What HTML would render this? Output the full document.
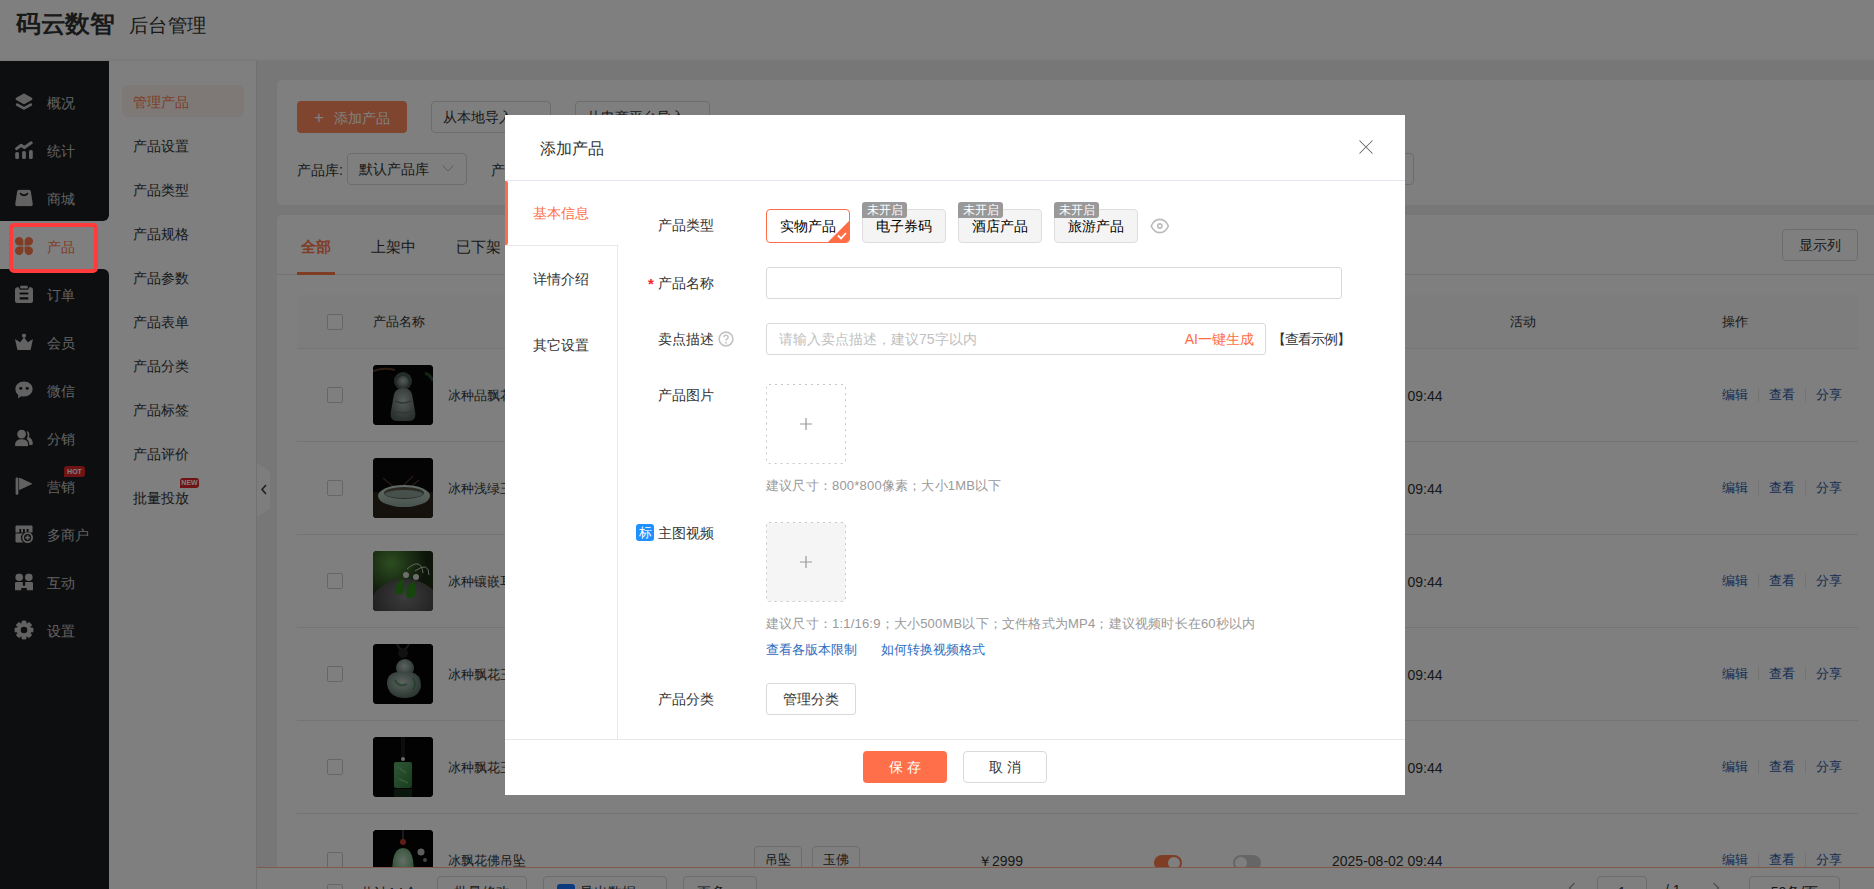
<!DOCTYPE html>
<html><head><meta charset="utf-8">
<style>
*{box-sizing:border-box;margin:0;padding:0}
html,body{width:1874px;height:889px;overflow:hidden;background:#eeeeee;font-family:"Liberation Sans",sans-serif;color:#333;font-size:14px}
.abs{position:absolute}
#header{position:absolute;left:0;top:0;width:1874px;height:61px;background:#fff}
#logo{position:absolute;left:16px;top:9px;font-size:24px;transform:scaleX(1.03);transform-origin:0 0;font-weight:bold;color:#333;line-height:30px}
#logo2{position:absolute;left:128.5px;top:13px;font-size:19.4px;transform:scaleX(1.02);transform-origin:0 0;color:#333;line-height:24px}
#side{position:absolute;left:0;top:61px;width:109px;height:828px;background:#fff}
.sd{position:absolute;left:0;width:109px;background:#1b1c20}
.si{position:absolute;left:0;width:109px;height:48px;color:#c4c4c4;font-size:14px}
.si span{position:absolute;left:47px;top:15px;line-height:20px}
.si svg{position:absolute;left:15px;top:50%;transform:translateY(-50%)}
#sub{position:absolute;left:109px;top:61px;width:147px;height:828px;background:#fff;border-right:1px solid #fff}
.ss{position:absolute;left:24px;font-size:14px;color:#333;line-height:20px}
#main{position:absolute;left:257px;top:61px;width:1617px;height:828px;background:#eeeeee}
#subline{position:absolute;left:256px;top:61px;width:1px;height:828px;background:#e2e2e2}
.card{position:absolute;background:#fff;border-radius:5px}
.btn{position:absolute;border:1px solid #d9d9d9;border-radius:4px;background:#fff;font-size:14px;color:#333;text-align:center}
#overlay{position:absolute;left:0;top:0;width:1874px;height:889px;background:rgba(0,0,0,0.5)}
#modal{position:absolute;left:505px;top:115px;width:900px;height:680px;background:#fff}
</style></head><body>
<div id="header"><div id="logo">码云数智</div><div id="logo2">后台管理</div></div>
<div id="side"><div class="sd" style="top:0;height:160px;border-bottom-right-radius:6px"></div><div class="sd" style="top:208px;height:620px;border-top-right-radius:6px"></div><div class="si" style="top:17px"><svg width="18" height="18" viewBox="0 0 18 18"><path d="M9 1.8L16.2 5.9 9 10 1.8 5.9Z" fill="#c4c4c4" stroke="#c4c4c4" stroke-width="2.4" stroke-linejoin="round"/><path d="M2.2 11.6L9 15.4 15.8 11.6" fill="none" stroke="#c4c4c4" stroke-width="2.8" stroke-linejoin="round" stroke-linecap="round"/></svg><span>概况</span></div><div class="si" style="top:65px"><svg width="18" height="18" viewBox="0 0 18 18"><path d="M1.6 7.6L6.2 4.2 9.4 6.6 16.2 1.8" stroke="#c4c4c4" stroke-width="3" fill="none" stroke-linejoin="round" stroke-linecap="round"/><rect x="0.2" y="11" width="3.8" height="7" rx="1.6" fill="#c4c4c4"/><rect x="7.1" y="10" width="3.8" height="8" rx="1.6" fill="#c4c4c4"/><rect x="14" y="9" width="3.8" height="9" rx="1.6" fill="#c4c4c4"/></svg><span>统计</span></div><div class="si" style="top:113px"><svg width="18" height="17" viewBox="0 0 18 17"><path d="M4 0.3H14Q15.6 0.3 15.8 1.8L17.8 14.6Q18 16.7 16 16.7H2Q0 16.7 0.2 14.6L2.2 1.8Q2.4 0.3 4 0.3Z" fill="#c4c4c4"/><path d="M5.5 4.2Q9 7.6 12.5 4.2" stroke="#1b1c20" stroke-width="1.7" fill="none" stroke-linecap="round"/></svg><span>商城</span></div><div class="si" style="top:161px"><svg width="18" height="18" viewBox="0 0 18 18"><path d="M8.4 8.4H4.2A4.2 4.2 0 1 1 8.4 4.2Z M9.6 8.4V4.2A4.2 4.2 0 1 1 13.8 8.4Z M9.6 9.6H13.8A4.2 4.2 0 1 1 9.6 13.8Z M8.4 9.6V13.8A4.2 4.2 0 1 1 4.2 9.6Z" fill="#ff7a4c"/></svg><span style="color:#ff7a4c">产品</span></div><div class="si" style="top:209px"><svg width="18" height="18" viewBox="0 0 18 18"><rect x="0" y="2.2" width="18" height="15.8" rx="2.6" fill="#c4c4c4"/><rect x="4.6" y="0" width="8.8" height="4.2" rx="1.4" fill="#c4c4c4" stroke="#1b1c20" stroke-width="1.3"/><rect x="4.6" y="7.4" width="8.8" height="2.2" rx="0.6" fill="#1b1c20"/><rect x="4.6" y="12.2" width="8.8" height="2.2" rx="0.6" fill="#1b1c20"/></svg><span>订单</span></div><div class="si" style="top:257px"><svg width="18" height="17" viewBox="0 0 18 17"><circle cx="9" cy="2.2" r="2.1" fill="#c4c4c4"/><path d="M0.2 6.4Q0 5.6 0.8 5.9L5.2 8.8 8.4 4.6Q9 4 9.6 4.6L12.8 8.8 17.2 5.9Q18 5.6 17.8 6.4L15.8 15.4Q15.6 16.6 14.4 16.6H3.6Q2.4 16.6 2.2 15.4Z" fill="#c4c4c4"/></svg><span>会员</span></div><div class="si" style="top:305px"><svg width="18" height="18" viewBox="0 0 18 18"><path d="M9 0.6C13.9 0.6 17.6 4 17.6 8.1 17.6 12.2 13.9 15.6 9 15.6 8 15.6 7 15.5 6.1 15.2L3 17.6 3.3 14.1C1.5 12.7 0.4 10.5 0.4 8.1 0.4 4 4.1 0.6 9 0.6Z" fill="#c4c4c4"/><ellipse cx="5.8" cy="7.4" rx="1.6" ry="1.3" fill="#1b1c20"/><ellipse cx="12.2" cy="7.4" rx="1.6" ry="1.3" fill="#1b1c20"/></svg><span>微信</span></div><div class="si" style="top:353px"><svg width="18" height="17" viewBox="0 0 18 17"><circle cx="6.6" cy="4.6" r="4.4" fill="#c4c4c4"/><path d="M0 15.4Q0 9.8 6.6 9.8 13.2 9.8 13.2 15.4 13.2 16.8 11.8 16.8H1.4Q0 16.8 0 15.4Z" fill="#c4c4c4"/><path d="M11.6 1.2Q15.4 2.6 14 7.6 17.8 9.6 17.8 14.2 17.8 15.6 16.4 15.6H14.4Q14.2 11.2 11.6 9.4 13.8 6.6 11.6 1.2Z" fill="#c4c4c4"/></svg><span>分销</span></div><div class="si" style="top:401px"><svg width="18" height="18" viewBox="0 0 18 18"><rect x="0.6" y="0.4" width="2.8" height="17.4" rx="1.4" fill="#c4c4c4"/><path d="M4.6 1.2L16.6 6.8 4.6 12.4Z" fill="#c4c4c4" stroke="#c4c4c4" stroke-width="1" stroke-linejoin="round"/></svg><span>营销</span></div><div class="si" style="top:449px"><svg width="18" height="18" viewBox="0 0 18 18"><path d="M1.5 0.5H16.5Q17.5 0.5 17.5 1.5V7.6H13.6V4H11.6V7.6H9.8V4H8V7.6H6.2V4H4.4V7.6H0.5V1.5Q0.5 0.5 1.5 0.5Z" fill="#c4c4c4"/><path d="M0.5 8.6H7.9A5.4 5.4 0 0 0 8.6 17.5H1.5Q0.5 17.5 0.5 16.5Z" fill="#c4c4c4"/><circle cx="12.6" cy="12.6" r="4.5" fill="none" stroke="#c4c4c4" stroke-width="1.8"/><path d="M12.6 10.2V15M10.2 12.6H15" stroke="#c4c4c4" stroke-width="1.6"/></svg><span>多商户</span></div><div class="si" style="top:497px"><svg width="18" height="17" viewBox="0 0 18 17"><circle cx="4.2" cy="3.8" r="3.8" fill="#c4c4c4"/><circle cx="13.8" cy="3.8" r="3.8" fill="#c4c4c4"/><path d="M0 10Q0 8.6 1.4 8.6H7.8V12.2H10.2V8.6H16.6Q18 8.6 18 10V17H11.8V14.6H6.2V17H0Z" fill="#c4c4c4"/></svg><span>互动</span></div><div class="si" style="top:545px"><svg width="18" height="18" viewBox="0 0 18 18" overflow="visible"><path d="M15.69 6.95 L18.00 7.09 L18.00 10.91 L15.69 11.05 L15.18 12.29 L16.72 14.01 L14.01 16.72 L12.29 15.18 L11.05 15.69 L10.91 18.00 L7.09 18.00 L6.95 15.69 L5.71 15.18 L3.99 16.72 L1.28 14.01 L2.82 12.29 L2.31 11.05 L0.00 10.91 L0.00 7.09 L2.31 6.95 L2.82 5.71 L1.28 3.99 L3.99 1.28 L5.71 2.82 L6.95 2.31 L7.09 0.00 L10.91 0.00 L11.05 2.31 L12.29 2.82 L14.01 1.28 L16.72 3.99 L15.18 5.71Z" fill="#c4c4c4" stroke="#c4c4c4" stroke-width="0.8" stroke-linejoin="round"/><circle cx="9" cy="9" r="3.3" fill="#1b1c20"/></svg><span>设置</span></div></div><div id="sub"><div class="abs" style="left:13px;top:24px;width:122px;height:32px;background:#fdf2ee;border-radius:6px"></div><div class="ss" style="top:31px;color:#ff7a4c">管理产品</div><div class="ss" style="top:75px;color:#333">产品设置</div><div class="ss" style="top:119px;color:#333">产品类型</div><div class="ss" style="top:163px;color:#333">产品规格</div><div class="ss" style="top:207px;color:#333">产品参数</div><div class="ss" style="top:251px;color:#333">产品表单</div><div class="ss" style="top:295px;color:#333">产品分类</div><div class="ss" style="top:339px;color:#333">产品标签</div><div class="ss" style="top:383px;color:#333">产品评价</div><div class="ss" style="top:427px;color:#333">批量投放</div><div class="abs" style="left:71px;top:417px;width:19px;height:10px;background:#e0262a;border-radius:3px 3px 3px 0;color:#fff;font-size:7px;line-height:10px;text-align:center;font-weight:bold">NEW</div></div><div class="abs" style="left:64px;top:466px;width:21px;height:11px;background:#e0262a;border-radius:3px 3px 3px 0;color:#fff;font-size:7px;line-height:11px;text-align:center;font-weight:bold">HOT</div>
<div id="main">
<div class="card" style="left:20px;top:19px;width:1620px;height:125px"></div>
<div class="abs" style="left:40px;top:40px;width:110px;height:32px;background:#ff8a5c;border-radius:4px;color:#fff;font-size:14px;line-height:32px"><span style="position:absolute;left:17px;top:1px;font-size:17px">+</span><span style="position:absolute;left:37px;top:1px">添加产品</span></div>
<div class="btn" style="left:174px;top:40px;width:120px;height:32px;line-height:30px;text-align:left;padding-left:11px">从本地导入<svg width="12" height="7" viewBox="0 0 12 7" style="position:absolute;right:10px;top:13px"><path d="M0.5 0.5L6 6 11.5 0.5" stroke="#bbb" fill="none" stroke-width="1"/></svg></div>
<div class="btn" style="left:318px;top:40px;width:135px;height:32px;line-height:30px;text-align:left;padding-left:11px">从电商平台导入<svg width="12" height="7" viewBox="0 0 12 7" style="position:absolute;right:10px;top:13px"><path d="M0.5 0.5L6 6 11.5 0.5" stroke="#bbb" fill="none" stroke-width="1"/></svg></div>
<div class="abs" style="left:40px;top:99px;line-height:20px">产品库:</div>
<div class="btn" style="left:90px;top:92px;width:120px;height:32px;line-height:30px;text-align:left;padding-left:11px">默认产品库<svg width="12" height="7" viewBox="0 0 12 7" style="position:absolute;right:12px;top:11px"><path d="M0.5 0.5L6 6 11.5 0.5" stroke="#bbb" fill="none" stroke-width="1"/></svg></div>
<div class="abs" style="left:234px;top:99px;line-height:20px">产品分类:</div>
<div class="btn" style="left:1043px;top:92px;width:114px;height:32px"></div>
<div class="card" style="left:20px;top:154px;width:1620px;height:700px"></div>
<div class="abs" style="left:44px;top:176px;font-size:15px;line-height:20px;color:#ff7a4c;font-weight:bold">全部</div>
<div class="abs" style="left:114px;top:176px;font-size:15px;line-height:20px;color:#333;font-weight:normal">上架中</div>
<div class="abs" style="left:199px;top:176px;font-size:15px;line-height:20px;color:#333;font-weight:normal">已下架</div>
<div class="abs" style="left:284px;top:176px;font-size:15px;line-height:20px;color:#333;font-weight:normal">已售罄</div>
<div class="abs" style="left:20px;top:213px;width:1597px;height:1px;background:#e8e8e8"></div>
<div class="abs" style="left:40px;top:211px;width:38px;height:3px;background:#ff7a4c"></div>
<div class="btn" style="left:1525px;top:168px;width:76px;height:32px;line-height:30px">显示列</div>
<div class="abs" style="left:40px;top:234px;width:1561px;height:54px;background:#fafafa;border-bottom:1px solid #e8e8e8"></div>
<div class="abs" style="left:70px;top:253px;width:16px;height:16px;border:1px solid #ccc;border-radius:2px;background:#fff"></div>
<div class="abs" style="left:116px;top:251px;line-height:20px;font-size:13px">产品名称</div>
<div class="abs" style="left:1253px;top:251px;line-height:20px;font-size:13px">活动</div>
<div class="abs" style="left:1465px;top:251px;line-height:20px;font-size:13px">操作</div>
<div class="abs" style="left:40px;top:380px;width:1561px;height:1px;background:#e8e8e8"></div>
<div class="abs" style="left:70px;top:326px;width:16px;height:16px;border:1px solid #ccc;border-radius:2px;background:#fff"></div>
<div class="abs" style="left:116px;top:304px;width:60px;height:60px;border-radius:4px;overflow:hidden;background:#050505"><svg width="60" height="60"><defs><radialGradient id="g1" cx="50%" cy="40%" r="60%"><stop offset="0" stop-color="#a9b8b4"/><stop offset="1" stop-color="#56625f"/></radialGradient></defs>
<rect width="60" height="60" fill="#070707"/>
<path d="M0 6Q12 2 22 5" stroke="#5a3a26" stroke-width="2" fill="none"/>
<path d="M52 8Q58 10 60 16" stroke="#2a4a2a" stroke-width="3" fill="none"/>
<circle cx="30" cy="16" r="9" fill="#4a5654"/>
<circle cx="30" cy="17" r="6" fill="url(#g1)"/>
<path d="M21 29Q23 23 30 23 37 23 39 29L42 46Q44 55 37 56H23Q16 55 18 46Z" fill="url(#g1)"/>
<path d="M22 36Q30 40 38 36M21 46Q30 50 39 46" stroke="#5f706c" stroke-width="1.5" fill="none"/></svg></div>
<div class="abs" style="left:191px;top:325px;line-height:20px;font-size:13px">冰种品飘花观音吊坠</div>
<div class="abs" style="left:1075px;top:325px;line-height:20px">2025-08-02 09:44</div>
<div class="abs" style="left:1465px;top:324px;line-height:20px;color:#2d5aa8;font-size:13px">编辑</div>
<div class="abs" style="left:1512px;top:324px;line-height:20px;color:#2d5aa8;font-size:13px">查看</div>
<div class="abs" style="left:1559px;top:324px;line-height:20px;color:#2d5aa8;font-size:13px">分享</div>
<div class="abs" style="left:1501px;top:327px;width:1px;height:14px;background:#e6e6e6"></div>
<div class="abs" style="left:1548px;top:327px;width:1px;height:14px;background:#e6e6e6"></div>
<div class="btn" style="left:497px;top:320px;width:48px;height:28px;line-height:26px;font-size:13px">吊坠</div>
<div class="btn" style="left:555px;top:320px;width:48px;height:28px;line-height:26px;font-size:13px">玉佛</div>
<div class="abs" style="left:721px;top:325px;line-height:20px">￥2999</div>
<div class="abs" style="left:897px;top:329px;width:28px;height:16px;border-radius:8px;background:#ff7a4c"><div style="position:absolute;right:2px;top:2px;width:12px;height:12px;border-radius:6px;background:#fff"></div></div>
<div class="abs" style="left:976px;top:329px;width:28px;height:16px;border-radius:8px;background:#ccc"><div style="position:absolute;left:2px;top:2px;width:12px;height:12px;border-radius:6px;background:#fff"></div></div>
<div class="abs" style="left:40px;top:473px;width:1561px;height:1px;background:#e8e8e8"></div>
<div class="abs" style="left:70px;top:419px;width:16px;height:16px;border:1px solid #ccc;border-radius:2px;background:#fff"></div>
<div class="abs" style="left:116px;top:397px;width:60px;height:60px;border-radius:4px;overflow:hidden;background:#050505"><svg width="60" height="60"><defs><linearGradient id="g2" x1="0" y1="0" x2="0" y2="1"><stop offset="0" stop-color="#c6d8d0"/><stop offset="1" stop-color="#8fa69c"/></linearGradient></defs>
<rect width="60" height="60" fill="#080808"/>
<rect y="34" width="60" height="26" fill="#2a241c"/>
<path d="M10 20L22 30M40 18L30 28M46 22L36 30" stroke="#5a3424" stroke-width="1.2"/>
<ellipse cx="31" cy="38" rx="26" ry="11" fill="url(#g2)"/>
<ellipse cx="31" cy="35" rx="20" ry="6" fill="#5b5449"/>
<ellipse cx="31" cy="36" rx="19" ry="4" fill="#8da296"/></svg></div>
<div class="abs" style="left:191px;top:418px;line-height:20px;font-size:13px">冰种浅绿玉手镯</div>
<div class="abs" style="left:1075px;top:418px;line-height:20px">2025-08-02 09:44</div>
<div class="abs" style="left:1465px;top:417px;line-height:20px;color:#2d5aa8;font-size:13px">编辑</div>
<div class="abs" style="left:1512px;top:417px;line-height:20px;color:#2d5aa8;font-size:13px">查看</div>
<div class="abs" style="left:1559px;top:417px;line-height:20px;color:#2d5aa8;font-size:13px">分享</div>
<div class="abs" style="left:1501px;top:420px;width:1px;height:14px;background:#e6e6e6"></div>
<div class="abs" style="left:1548px;top:420px;width:1px;height:14px;background:#e6e6e6"></div>
<div class="btn" style="left:497px;top:413px;width:48px;height:28px;line-height:26px;font-size:13px">吊坠</div>
<div class="btn" style="left:555px;top:413px;width:48px;height:28px;line-height:26px;font-size:13px">玉佛</div>
<div class="abs" style="left:721px;top:418px;line-height:20px">￥2999</div>
<div class="abs" style="left:897px;top:422px;width:28px;height:16px;border-radius:8px;background:#ff7a4c"><div style="position:absolute;right:2px;top:2px;width:12px;height:12px;border-radius:6px;background:#fff"></div></div>
<div class="abs" style="left:976px;top:422px;width:28px;height:16px;border-radius:8px;background:#ccc"><div style="position:absolute;left:2px;top:2px;width:12px;height:12px;border-radius:6px;background:#fff"></div></div>
<div class="abs" style="left:40px;top:566px;width:1561px;height:1px;background:#e8e8e8"></div>
<div class="abs" style="left:70px;top:512px;width:16px;height:16px;border:1px solid #ccc;border-radius:2px;background:#fff"></div>
<div class="abs" style="left:116px;top:490px;width:60px;height:60px;border-radius:4px;overflow:hidden;background:#050505"><svg width="60" height="60"><defs><radialGradient id="g3" cx="30%" cy="20%" r="60%"><stop offset="0" stop-color="#5a9a40"/><stop offset="1" stop-color="#1a2a14"/></radialGradient><radialGradient id="g3b" cx="50%" cy="30%" r="70%"><stop offset="0" stop-color="#777"/><stop offset="1" stop-color="#2a2a2a"/></radialGradient></defs>
<rect width="60" height="60" fill="url(#g3)"/>
<ellipse cx="32" cy="58" rx="36" ry="30" fill="url(#g3b)"/>
<path d="M34 18Q48 6 50 22M42 20Q56 10 56 24" stroke="#ccc" stroke-width="1" fill="none"/>
<circle cx="33" cy="24" r="3" fill="#ddd"/><circle cx="43" cy="26" r="3" fill="#ddd"/>
<path d="M30 28Q22 32 22 40Q24 46 30 42Q33 36 30 28Z" fill="#2d8a1c"/>
<path d="M41 30Q33 34 33 44Q35 50 41 46Q44 40 41 30Z" fill="#2d8a1c"/></svg></div>
<div class="abs" style="left:191px;top:511px;line-height:20px;font-size:13px">冰种镶嵌耳坠</div>
<div class="abs" style="left:1075px;top:511px;line-height:20px">2025-08-02 09:44</div>
<div class="abs" style="left:1465px;top:510px;line-height:20px;color:#2d5aa8;font-size:13px">编辑</div>
<div class="abs" style="left:1512px;top:510px;line-height:20px;color:#2d5aa8;font-size:13px">查看</div>
<div class="abs" style="left:1559px;top:510px;line-height:20px;color:#2d5aa8;font-size:13px">分享</div>
<div class="abs" style="left:1501px;top:513px;width:1px;height:14px;background:#e6e6e6"></div>
<div class="abs" style="left:1548px;top:513px;width:1px;height:14px;background:#e6e6e6"></div>
<div class="btn" style="left:497px;top:506px;width:48px;height:28px;line-height:26px;font-size:13px">吊坠</div>
<div class="btn" style="left:555px;top:506px;width:48px;height:28px;line-height:26px;font-size:13px">玉佛</div>
<div class="abs" style="left:721px;top:511px;line-height:20px">￥2999</div>
<div class="abs" style="left:897px;top:515px;width:28px;height:16px;border-radius:8px;background:#ff7a4c"><div style="position:absolute;right:2px;top:2px;width:12px;height:12px;border-radius:6px;background:#fff"></div></div>
<div class="abs" style="left:976px;top:515px;width:28px;height:16px;border-radius:8px;background:#ccc"><div style="position:absolute;left:2px;top:2px;width:12px;height:12px;border-radius:6px;background:#fff"></div></div>
<div class="abs" style="left:40px;top:659px;width:1561px;height:1px;background:#e8e8e8"></div>
<div class="abs" style="left:70px;top:605px;width:16px;height:16px;border:1px solid #ccc;border-radius:2px;background:#fff"></div>
<div class="abs" style="left:116px;top:583px;width:60px;height:60px;border-radius:4px;overflow:hidden;background:#050505"><svg width="60" height="60"><defs><radialGradient id="g4" cx="45%" cy="40%" r="60%"><stop offset="0" stop-color="#b8c6c0"/><stop offset="1" stop-color="#566e64"/></radialGradient></defs>
<rect width="60" height="60" fill="#050505"/>
<path d="M24 0Q30 12 36 0" stroke="#333" stroke-width="2" fill="none"/>
<circle cx="30" cy="9" r="5" fill="#222"/>
<circle cx="32" cy="24" r="9" fill="url(#g4)"/>
<path d="M14 40Q14 28 26 28H38Q48 30 48 42 46 54 32 54 16 54 14 40Z" fill="url(#g4)"/>
<path d="M22 36Q26 44 34 40M40 34Q44 40 40 46" stroke="#3e7a4a" stroke-width="2" fill="none" opacity=".7"/></svg></div>
<div class="abs" style="left:191px;top:604px;line-height:20px;font-size:13px">冰种飘花玉佛吊坠</div>
<div class="abs" style="left:1075px;top:604px;line-height:20px">2025-08-02 09:44</div>
<div class="abs" style="left:1465px;top:603px;line-height:20px;color:#2d5aa8;font-size:13px">编辑</div>
<div class="abs" style="left:1512px;top:603px;line-height:20px;color:#2d5aa8;font-size:13px">查看</div>
<div class="abs" style="left:1559px;top:603px;line-height:20px;color:#2d5aa8;font-size:13px">分享</div>
<div class="abs" style="left:1501px;top:606px;width:1px;height:14px;background:#e6e6e6"></div>
<div class="abs" style="left:1548px;top:606px;width:1px;height:14px;background:#e6e6e6"></div>
<div class="btn" style="left:497px;top:599px;width:48px;height:28px;line-height:26px;font-size:13px">吊坠</div>
<div class="btn" style="left:555px;top:599px;width:48px;height:28px;line-height:26px;font-size:13px">玉佛</div>
<div class="abs" style="left:721px;top:604px;line-height:20px">￥2999</div>
<div class="abs" style="left:897px;top:608px;width:28px;height:16px;border-radius:8px;background:#ff7a4c"><div style="position:absolute;right:2px;top:2px;width:12px;height:12px;border-radius:6px;background:#fff"></div></div>
<div class="abs" style="left:976px;top:608px;width:28px;height:16px;border-radius:8px;background:#ccc"><div style="position:absolute;left:2px;top:2px;width:12px;height:12px;border-radius:6px;background:#fff"></div></div>
<div class="abs" style="left:40px;top:752px;width:1561px;height:1px;background:#e8e8e8"></div>
<div class="abs" style="left:70px;top:698px;width:16px;height:16px;border:1px solid #ccc;border-radius:2px;background:#fff"></div>
<div class="abs" style="left:116px;top:676px;width:60px;height:60px;border-radius:4px;overflow:hidden;background:#050505"><svg width="60" height="60"><defs><linearGradient id="g5" x1="0" y1="0" x2="1" y2="1"><stop offset="0" stop-color="#5fae6a"/><stop offset="1" stop-color="#2f7a3a"/></linearGradient></defs>
<rect width="60" height="60" fill="#040404"/>
<path d="M29 0V20M31 0V20" stroke="#333" stroke-width="1"/>
<circle cx="30" cy="22" r="2" fill="#cfe0d0"/>
<rect x="21" y="25" width="18" height="26" rx="2" fill="url(#g5)"/>
<path d="M25 30L33 36M26 42L35 46" stroke="#8fcf8a" stroke-width="1.5" opacity=".6"/>
<rect x="21" y="52" width="18" height="8" fill="#1f4a26" opacity=".6"/></svg></div>
<div class="abs" style="left:191px;top:697px;line-height:20px;font-size:13px">冰种飘花玉牌吊坠</div>
<div class="abs" style="left:1075px;top:697px;line-height:20px">2025-08-02 09:44</div>
<div class="abs" style="left:1465px;top:696px;line-height:20px;color:#2d5aa8;font-size:13px">编辑</div>
<div class="abs" style="left:1512px;top:696px;line-height:20px;color:#2d5aa8;font-size:13px">查看</div>
<div class="abs" style="left:1559px;top:696px;line-height:20px;color:#2d5aa8;font-size:13px">分享</div>
<div class="abs" style="left:1501px;top:699px;width:1px;height:14px;background:#e6e6e6"></div>
<div class="abs" style="left:1548px;top:699px;width:1px;height:14px;background:#e6e6e6"></div>
<div class="btn" style="left:497px;top:692px;width:48px;height:28px;line-height:26px;font-size:13px">吊坠</div>
<div class="btn" style="left:555px;top:692px;width:48px;height:28px;line-height:26px;font-size:13px">玉佛</div>
<div class="abs" style="left:721px;top:697px;line-height:20px">￥2999</div>
<div class="abs" style="left:897px;top:701px;width:28px;height:16px;border-radius:8px;background:#ff7a4c"><div style="position:absolute;right:2px;top:2px;width:12px;height:12px;border-radius:6px;background:#fff"></div></div>
<div class="abs" style="left:976px;top:701px;width:28px;height:16px;border-radius:8px;background:#ccc"><div style="position:absolute;left:2px;top:2px;width:12px;height:12px;border-radius:6px;background:#fff"></div></div>
<div class="abs" style="left:70px;top:791px;width:16px;height:16px;border:1px solid #ccc;border-radius:2px;background:#fff"></div>
<div class="abs" style="left:116px;top:769px;width:60px;height:60px;border-radius:4px;overflow:hidden;background:#050505"><svg width="60" height="60"><defs><radialGradient id="g6" cx="50%" cy="40%" r="60%"><stop offset="0" stop-color="#c8dccc"/><stop offset="1" stop-color="#4f9a5a"/></radialGradient></defs>
<rect width="60" height="60" fill="#050505"/>
<path d="M30 0V10" stroke="#444" stroke-width="1.5"/>
<circle cx="30" cy="12" r="3" fill="#c03a28"/>
<circle cx="48" cy="22" r="3.5" fill="#bbb"/><circle cx="52" cy="30" r="2" fill="#888"/>
<path d="M20 30Q22 18 30 18 38 18 40 30L42 50H18Z" fill="url(#g6)"/></svg></div>
<div class="abs" style="left:191px;top:790px;line-height:20px;font-size:13px">冰飘花佛吊坠</div>
<div class="abs" style="left:1075px;top:790px;line-height:20px">2025-08-02 09:44</div>
<div class="abs" style="left:1465px;top:789px;line-height:20px;color:#2d5aa8;font-size:13px">编辑</div>
<div class="abs" style="left:1512px;top:789px;line-height:20px;color:#2d5aa8;font-size:13px">查看</div>
<div class="abs" style="left:1559px;top:789px;line-height:20px;color:#2d5aa8;font-size:13px">分享</div>
<div class="abs" style="left:1501px;top:792px;width:1px;height:14px;background:#e6e6e6"></div>
<div class="abs" style="left:1548px;top:792px;width:1px;height:14px;background:#e6e6e6"></div>
<div class="btn" style="left:497px;top:785px;width:48px;height:28px;line-height:26px;font-size:13px">吊坠</div>
<div class="btn" style="left:555px;top:785px;width:48px;height:28px;line-height:26px;font-size:13px">玉佛</div>
<div class="abs" style="left:721px;top:790px;line-height:20px">￥2999</div>
<div class="abs" style="left:897px;top:794px;width:28px;height:16px;border-radius:8px;background:#ff7a4c"><div style="position:absolute;right:2px;top:2px;width:12px;height:12px;border-radius:6px;background:#fff"></div></div>
<div class="abs" style="left:976px;top:794px;width:28px;height:16px;border-radius:8px;background:#ccc"><div style="position:absolute;left:2px;top:2px;width:12px;height:12px;border-radius:6px;background:#fff"></div></div>
<svg class="abs" style="left:0px;top:402px" width="14" height="54" viewBox="0 0 14 54"><path d="M0 0Q4 2 11 7Q13 8.5 13 11V43Q13 45.5 11 47Q4 52 0 54Z" fill="#fafafa"/><path d="M9 22L5 26.5 9 31" stroke="#3a3f4a" fill="none" stroke-width="1.6"/></svg>
<div class="abs" style="left:0px;top:806px;width:1617px;height:23px;background:#fff;border-top:1px solid #ffb595"></div>
<div class="abs" style="left:70px;top:823px;width:16px;height:16px;border:1px solid #ccc;border-radius:2px;background:#fff"></div>
<div class="abs" style="left:103px;top:822px;line-height:20px">共计14个</div>
<div class="btn" style="left:180px;top:815px;width:90px;height:32px;line-height:30px;text-align:left;padding-left:16px">批量修改</div>
<div class="btn" style="left:286px;top:815px;width:124px;height:32px;line-height:30px;text-align:left;padding-left:36px">导出数据<svg width="12" height="7" viewBox="0 0 12 7" style="position:absolute;right:10px;top:13px"><path d="M0.5 0.5L6 6 11.5 0.5" stroke="#bbb" fill="none" stroke-width="1"/></svg></div>
<div class="btn" style="left:426px;top:815px;width:74px;height:32px;line-height:30px;text-align:left;padding-left:13px">更多<svg width="12" height="7" viewBox="0 0 12 7" style="position:absolute;right:10px;top:13px"><path d="M0.5 0.5L6 6 11.5 0.5" stroke="#bbb" fill="none" stroke-width="1"/></svg></div>
<div class="abs" style="left:300px;top:823px;width:18px;height:18px;background:#1677ff;border-radius:3px"></div>
<svg class="abs" style="left:1311px;top:821px" width="8" height="12" viewBox="0 0 8 12"><path d="M6.5 1L1.5 6 6.5 11" stroke="#999" fill="none" stroke-width="1.2"/></svg>
<svg class="abs" style="left:1455px;top:821px" width="8" height="12" viewBox="0 0 8 12"><path d="M1.5 1L6.5 6 1.5 11" stroke="#999" fill="none" stroke-width="1.2"/></svg>
<div class="btn" style="left:1340px;top:815px;width:50px;height:32px;line-height:30px">1</div>
<div class="abs" style="left:1408px;top:819px;line-height:20px">/ 1</div>
<div class="btn" style="left:1492px;top:815px;width:91px;height:32px;line-height:30px">50条/页</div>
</div>
<div id="subline"></div>
<div class="abs" style="left:0;top:58px;width:1874px;height:3px;background:linear-gradient(rgba(0,0,0,0),rgba(0,0,0,0.06))"></div>
<div id="overlay"></div>
<div id="modal">
<div class="abs" style="left:35px;top:23px;font-size:16px;line-height:22px;color:#333">添加产品</div>
<svg class="abs" style="left:854px;top:25px" width="14" height="14" viewBox="0 0 14 14"><path d="M0.5 0.5L13.5 13.5M13.5 0.5L0.5 13.5" stroke="#666" stroke-width="1.05"/></svg>
<div class="abs" style="left:0;top:65px;width:900px;height:1px;background:#e6e6ee"></div>
<div class="abs" style="left:0;top:66px;width:3px;height:64px;background:#ff6d46;border-radius:0 2px 2px 0"></div>
<div class="abs" style="left:28px;top:88px;line-height:20px;color:#ff6d46">基本信息</div>
<div class="abs" style="left:0;top:130px;width:113px;height:494px;border-top:1px solid #e8e8e8;border-right:1px solid #e8e8e8"></div>
<div class="abs" style="left:28px;top:154px;line-height:20px">详情介绍</div>
<div class="abs" style="left:28px;top:220px;line-height:20px">其它设置</div>
<div class="abs" style="left:95px;top:100px;width:114px;text-align:right;line-height:20px">产品类型</div>
<div class="abs" style="left:95px;top:158px;width:114px;text-align:right;line-height:20px">产品名称</div>
<div class="abs" style="left:143px;top:162px;color:#f5222d;font-size:15px;line-height:14px;font-weight:bold">*</div>
<div class="abs" style="left:95px;top:214px;width:114px;text-align:right;line-height:20px">卖点描述</div>
<svg class="abs" style="left:213px;top:216px" width="16" height="16" viewBox="0 0 16 16"><circle cx="8" cy="8" r="6.9" stroke="#c4c4c4" fill="none" stroke-width="1.6"/><path d="M5.9 6.3Q5.9 4.2 8 4.2T10.1 6.3Q10.1 7.4 8.9 8 8 8.5 8 9.8" stroke="#c4c4c4" fill="none" stroke-width="1.5"/><circle cx="8" cy="11.8" r="0.95" fill="#c4c4c4"/></svg>
<div class="abs" style="left:95px;top:270px;width:114px;text-align:right;line-height:20px">产品图片</div>
<div class="abs" style="left:95px;top:408px;width:114px;text-align:right;line-height:20px">主图视频</div>
<div class="abs" style="left:131px;top:409px;width:18px;height:17px;background:#1e90ff;border-radius:3px;color:#fff;font-size:13px;line-height:17px;text-align:center">标</div>
<div class="abs" style="left:95px;top:574px;width:114px;text-align:right;line-height:20px">产品分类</div>
<div class="abs" style="left:261px;top:94px;width:84px;height:34px;border:1px solid #ff6d46;border-radius:4px;background:#fff;overflow:hidden;text-align:center;line-height:32px;color:#000">实物产品<svg style="position:absolute;right:0;bottom:0" width="21" height="21" viewBox="0 0 21 21"><path d="M21 0V21H0Z" fill="#ff6d46"/><path d="M10 14.5L13 17.5 18 12" stroke="#fff" stroke-width="1.8" fill="none"/></svg></div>
<div class="abs" style="left:357px;top:94px;width:84px;height:34px;border:1px solid #ddd;border-radius:4px;background:#f4f4f4;text-align:center;line-height:32px;color:#000">电子券码</div>
<div class="abs" style="left:357px;top:87px;width:45px;height:16px;background:#999;border-radius:3px 3px 3px 0;color:#fff;font-size:12px;line-height:16px;text-align:center">未开启</div>
<div class="abs" style="left:453px;top:94px;width:84px;height:34px;border:1px solid #ddd;border-radius:4px;background:#f4f4f4;text-align:center;line-height:32px;color:#000">酒店产品</div>
<div class="abs" style="left:453px;top:87px;width:45px;height:16px;background:#999;border-radius:3px 3px 3px 0;color:#fff;font-size:12px;line-height:16px;text-align:center">未开启</div>
<div class="abs" style="left:549px;top:94px;width:84px;height:34px;border:1px solid #ddd;border-radius:4px;background:#f4f4f4;text-align:center;line-height:32px;color:#000">旅游产品</div>
<div class="abs" style="left:549px;top:87px;width:45px;height:16px;background:#999;border-radius:3px 3px 3px 0;color:#fff;font-size:12px;line-height:16px;text-align:center">未开启</div>
<svg class="abs" style="left:645px;top:103px" width="20" height="16" viewBox="0 0 20 16"><path d="M1.2 8Q4 1.4 9.8 1.4 15.6 1.4 18.4 8 15.6 14.6 9.8 14.6 4 14.6 1.2 8Z" stroke="#bbb" stroke-width="1.6" fill="none" stroke-linejoin="round"/><circle cx="9.8" cy="8" r="2.1" stroke="#bbb" stroke-width="1.6" fill="none"/></svg>
<div class="abs" style="left:261px;top:152px;width:576px;height:32px;border:1px solid #d9d9d9;border-radius:3px"></div>
<div class="abs" style="left:261px;top:208px;width:500px;height:32px;border:1px solid #d9d9d9;border-radius:3px"><span style="position:absolute;left:12px;top:5px;line-height:20px;color:#bfbfbf;font-size:14px">请输入卖点描述，建议75字以内</span><span style="position:absolute;right:11px;top:5px;line-height:20px;color:#ff6d46;font-size:14px">AI一键生成</span></div>
<div class="abs" style="left:767px;top:214px;line-height:20px;color:#333;letter-spacing:-1px">【查看示例】</div>
<div class="abs" style="left:261px;top:269px;width:80px;height:80px"><svg style="position:absolute;left:0;top:0" width="80" height="80"><rect x="0.5" y="0.5" width="79" height="79" rx="2.5" fill="#fff" stroke="#c8c8c8" stroke-dasharray="2 4"/><path d="M40 34V46M34 40H46" stroke="#999" stroke-width="1.2"/></svg></div>
<div class="abs" style="left:261px;top:361px;line-height:20px;color:#999;font-size:13px;letter-spacing:0.2px">建议尺寸：800*800像素；大小1MB以下</div>
<div class="abs" style="left:261px;top:407px;width:80px;height:80px"><svg style="position:absolute;left:0;top:0" width="80" height="80"><rect x="0.5" y="0.5" width="79" height="79" rx="2.5" fill="#f5f5f5" stroke="#c8c8c8" stroke-dasharray="2 4"/><path d="M40 34V46M34 40H46" stroke="#999" stroke-width="1.2"/></svg></div>
<div class="abs" style="left:261px;top:499px;line-height:20px;color:#999;font-size:13px;letter-spacing:0.2px">建议尺寸：1:1/16:9；大小500MB以下；文件格式为MP4；建议视频时长在60秒以内</div>
<div class="abs" style="left:261px;top:525px;line-height:20px;color:#2d6cc0;font-size:13px">查看各版本限制</div>
<div class="abs" style="left:376px;top:525px;line-height:20px;color:#2d6cc0;font-size:13px">如何转换视频格式</div>
<div class="abs" style="left:261px;top:568px;width:90px;height:32px;border:1px solid #d9d9d9;border-radius:3px;text-align:center;line-height:30px">管理分类</div>
<div class="abs" style="left:0;top:624px;width:900px;height:1px;background:#e8e8e8"></div>
<div class="abs" style="left:358px;top:636px;width:84px;height:32px;background:#ff704a;border-radius:4px;color:#fff;text-align:center;line-height:33px;letter-spacing:4px;padding-left:4px">保存</div>
<div class="abs" style="left:458px;top:636px;width:84px;height:32px;border:1px solid #d9d9d9;border-radius:4px;color:#333;text-align:center;line-height:31px;letter-spacing:4px;padding-left:4px">取消</div>
</div>
<div class="abs" style="left:9px;top:223px;width:89px;height:50px;border:4px solid #ff3b3b;border-radius:5px"></div>
</body></html>
